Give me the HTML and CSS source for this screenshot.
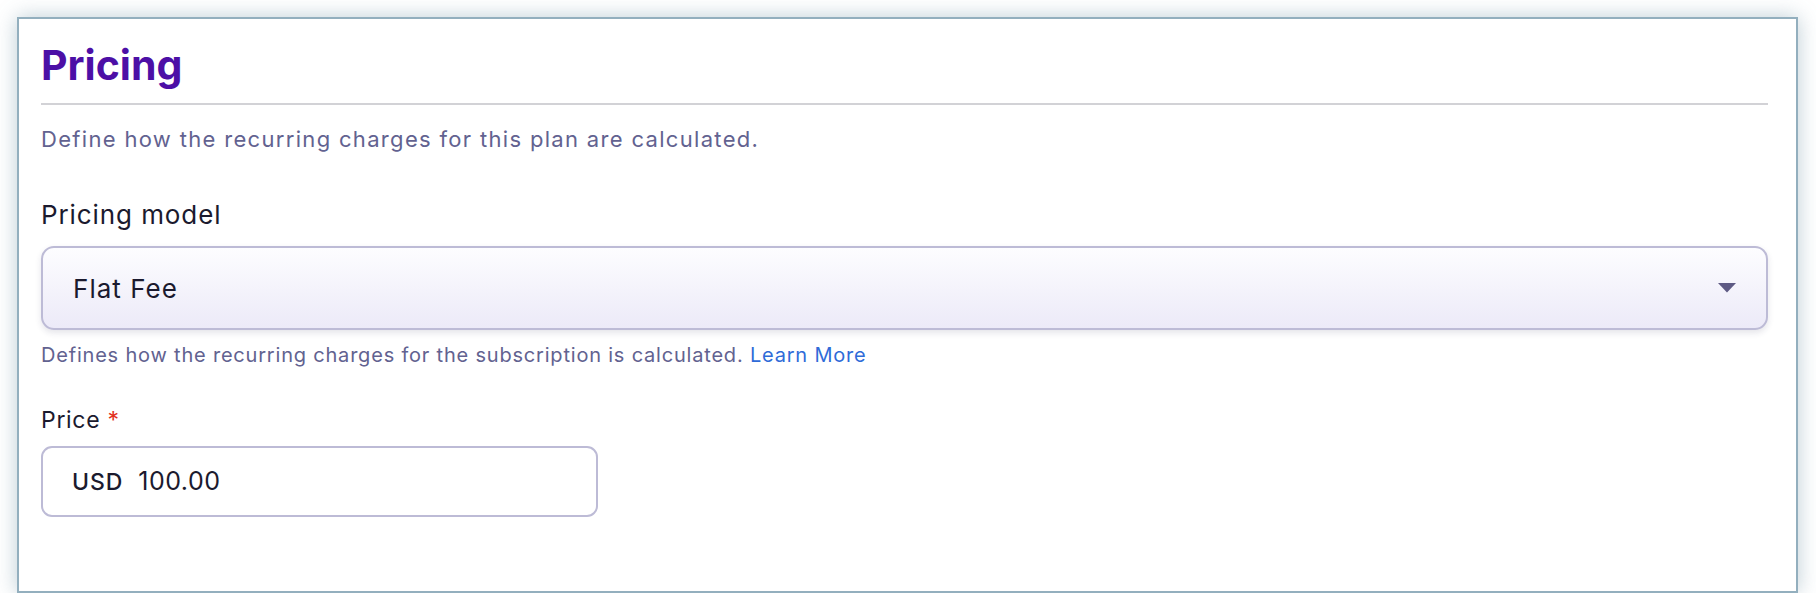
FILE: index.html
```html
<!DOCTYPE html>
<html lang="en">
<head>
    <meta charset="UTF-8">
    <meta name="viewport" content="width=device-width, initial-scale=1.0">
    <title>Pricing</title>
    <link rel="stylesheet" href="styles.css">
</head>
<body>
    <section class="card">
        <h1 class="card-title">Pricing</h1>
        <p class="card-desc">Define how the recurring charges for this plan are calculated.</p>

        <div class="field">
            <label class="field-label big" for="model">Pricing model</label>
            <div class="select">
                <span class="select-value">Flat Fee</span>
                <svg class="select-arrow" width="18" height="10" viewBox="0 0 18 10"><path d="M0 0h18l-9 9.5z" fill="#5e5a84"/></svg>
            </div>
            <p class="field-help">Defines how the recurring charges for the subscription is calculated. <a href="#">Learn More</a></p>
        </div>

        <div class="field price-field">
            <label class="field-label" for="price">Price <span class="req">*</span></label>
            <div class="money">
                <span class="currency">USD</span>
                <span class="amount">100.00</span>
            </div>
        </div>
    </section>
</body>
</html>
```

FILE: styles.css
```css
* {
    padding: 0;
    margin: 0;
    box-sizing: border-box;
}

body {
    font-family: Inter, "Noto Sans", sans-serif;
    background: #fff;
    color: #1b1a2e;
}

.card {
    margin: 17px 18px 0 17px;
    height: 576px;
    border: 2px solid #93afbe;
    background: #fff;
    box-shadow: 0 0 20px rgba(90, 130, 150, 0.4);
    padding: 21px 28px 0 22px;
}

.card-title {
    font-size: 41px;
    line-height: 50px;
    font-weight: 700;
    color: #4c0fa6;
    padding-bottom: 13px;
    border-bottom: 2px solid #d2d2d6;
}

.card-desc {
    margin-top: 19px;
    font-size: 22px;
    line-height: 30px;
    letter-spacing: 0.06em;
    color: #626290;
}

.field {
    margin-top: 45px;
}

.field-label {
    display: block;
    font-size: 23px;
    line-height: 28px;
    letter-spacing: 0.03em;
    color: #1b1a2e;
}

.field-label.big {
    font-size: 26px;
    line-height: 32px;
    letter-spacing: 0.035em;
}

.req {
    color: #e2311d;
}

.select {
    margin-top: 15px;
    height: 84px;
    border: 2px solid #bdbbd6;
    border-radius: 13px;
    background: linear-gradient(#fdfdff, #eceaf8);
    box-shadow: 0 3px 6px rgba(40, 40, 80, 0.12);
    display: flex;
    align-items: center;
    padding: 0 30px;
}

.select-value {
    flex: 1;
    font-size: 26px;
    letter-spacing: 0.04em;
    color: #1b1a2e;
}

.field-help {
    margin-top: 12px;
    font-size: 20px;
    line-height: 26px;
    letter-spacing: 0.04em;
    color: #626290;
}

.field-help a {
    color: #2f6bd8;
    text-decoration: none;
}

.price-field {
    margin-top: 38px;
}

.money {
    margin-top: 12px;
    width: 557px;
    height: 71px;
    border: 2px solid #bdbbd6;
    border-radius: 11px;
    display: flex;
    align-items: baseline;
    padding: 18px 0 0 29px;
    gap: 15px;
}

.currency {
    font-size: 23px;
    font-weight: 500;
    letter-spacing: 0.04em;
}

.amount {
    font-size: 25px;
    letter-spacing: 0.02em;
}
```
